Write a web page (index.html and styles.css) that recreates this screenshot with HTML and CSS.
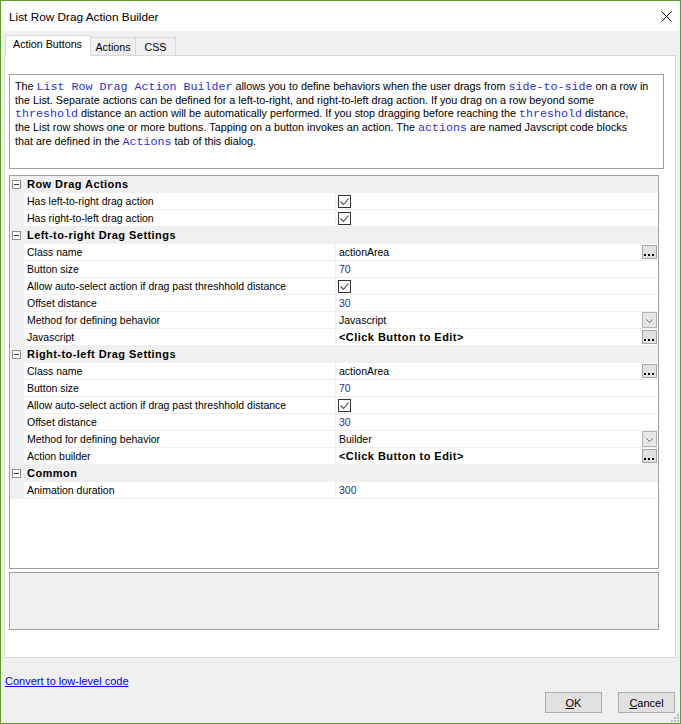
FILE: index.html
```html
<!DOCTYPE html>
<html>
<head>
<meta charset="utf-8">
<link rel="stylesheet" href="styles.css">
</head>
<body>
<div class="window">
  <div class="titlebar">
    <span class="title">List Row Drag Action Builder</span>
    <svg class="close" width="11" height="11" viewBox="0 0 11 11"><path d="M0.5 0.5 L10.5 10.5 M10.5 0.5 L0.5 10.5" stroke="#000" stroke-width="1"/></svg>
  </div>
  <div class="tabs">
    <div class="tab active">Action Buttons</div>
    <div class="tab inactive w-actions">Actions</div>
    <div class="tab inactive w-css">CSS</div>
  </div>
  <div class="panel">
    <div class="desc">
      The <span class="code">List Row Drag Action Builder</span> allows you to define behaviors when the user drags from <span class="code">side-to-side</span> on a row in<br>
      the List. Separate actions can be defined for a left-to-right, and right-to-left drag action. If you drag on a row beyond some<br>
      <span class="code">threshold</span> distance an action will be automatically performed. If you stop dragging before reaching the <span class="code">threshold</span> distance,<br>
      the List row shows one or more buttons. Tapping on a button invokes an action. The <span class="code">actions</span> are named Javscript code blocks<br>
      that are defined in the <span class="code">Actions</span> tab of this dialog.
    </div>
    <div class="grid">
      <div class="row cat"><span class="minus"></span><span class="cat-name">Row Drag Actions</span></div>
      <div class="row prop"><span class="gutter"></span><span class="label">Has left-to-right drag action</span><span class="value chk"><span class="check"><svg width="11" height="11" viewBox="0 0 11 11"><path d="M1.5 5.5 L4.5 8.5 L9.5 2.5" fill="none" stroke="#4a4a4a" stroke-width="1.1"/></svg></span></span></div>
      <div class="row prop"><span class="gutter"></span><span class="label">Has right-to-left drag action</span><span class="value chk"><span class="check"><svg width="11" height="11" viewBox="0 0 11 11"><path d="M1.5 5.5 L4.5 8.5 L9.5 2.5" fill="none" stroke="#4a4a4a" stroke-width="1.1"/></svg></span></span></div>

      <div class="row cat"><span class="minus"></span><span class="cat-name">Left-to-right Drag Settings</span></div>
      <div class="row prop"><span class="gutter"></span><span class="label">Class name</span><span class="value"><span class="vtext">actionArea</span><span class="btn-ell"><svg width="13" height="12" viewBox="0 0 13 12"><rect x="1" y="8" width="2" height="2" fill="#000"/><rect x="5" y="8" width="2" height="2" fill="#000"/><rect x="9" y="8" width="2" height="2" fill="#000"/></svg></span></span></div>
      <div class="row prop"><span class="gutter"></span><span class="label">Button size</span><span class="value"><span class="vtext num">70</span></span></div>
      <div class="row prop"><span class="gutter"></span><span class="label">Allow auto-select action if drag past threshhold distance</span><span class="value chk"><span class="check"><svg width="11" height="11" viewBox="0 0 11 11"><path d="M1.5 5.5 L4.5 8.5 L9.5 2.5" fill="none" stroke="#4a4a4a" stroke-width="1.1"/></svg></span></span></div>
      <div class="row prop"><span class="gutter"></span><span class="label">Offset distance</span><span class="value"><span class="vtext num">30</span></span></div>
      <div class="row prop"><span class="gutter"></span><span class="label">Method for defining behavior</span><span class="value"><span class="vtext">Javascript</span><span class="btn-drop"><svg width="13" height="14" viewBox="0 0 13 14"><path d="M3.5 6.5 L6.5 9.5 L9.5 6.5" fill="none" stroke="#606060" stroke-width="1"/></svg></span></span></div>
      <div class="row prop"><span class="gutter"></span><span class="label">Javascript</span><span class="value"><span class="vtext edit">&lt;Click Button to Edit&gt;</span><span class="btn-ell"><svg width="13" height="12" viewBox="0 0 13 12"><rect x="1" y="8" width="2" height="2" fill="#000"/><rect x="5" y="8" width="2" height="2" fill="#000"/><rect x="9" y="8" width="2" height="2" fill="#000"/></svg></span></span></div>

      <div class="row cat"><span class="minus"></span><span class="cat-name">Right-to-left Drag Settings</span></div>
      <div class="row prop"><span class="gutter"></span><span class="label">Class name</span><span class="value"><span class="vtext">actionArea</span><span class="btn-ell"><svg width="13" height="12" viewBox="0 0 13 12"><rect x="1" y="8" width="2" height="2" fill="#000"/><rect x="5" y="8" width="2" height="2" fill="#000"/><rect x="9" y="8" width="2" height="2" fill="#000"/></svg></span></span></div>
      <div class="row prop"><span class="gutter"></span><span class="label">Button size</span><span class="value"><span class="vtext num">70</span></span></div>
      <div class="row prop"><span class="gutter"></span><span class="label">Allow auto-select action if drag past threshhold distance</span><span class="value chk"><span class="check"><svg width="11" height="11" viewBox="0 0 11 11"><path d="M1.5 5.5 L4.5 8.5 L9.5 2.5" fill="none" stroke="#4a4a4a" stroke-width="1.1"/></svg></span></span></div>
      <div class="row prop"><span class="gutter"></span><span class="label">Offset distance</span><span class="value"><span class="vtext num">30</span></span></div>
      <div class="row prop"><span class="gutter"></span><span class="label">Method for defining behavior</span><span class="value"><span class="vtext">Builder</span><span class="btn-drop"><svg width="13" height="14" viewBox="0 0 13 14"><path d="M3.5 6.5 L6.5 9.5 L9.5 6.5" fill="none" stroke="#606060" stroke-width="1"/></svg></span></span></div>
      <div class="row prop"><span class="gutter"></span><span class="label">Action builder</span><span class="value"><span class="vtext edit">&lt;Click Button to Edit&gt;</span><span class="btn-ell"><svg width="13" height="12" viewBox="0 0 13 12"><rect x="1" y="8" width="2" height="2" fill="#000"/><rect x="5" y="8" width="2" height="2" fill="#000"/><rect x="9" y="8" width="2" height="2" fill="#000"/></svg></span></span></div>

      <div class="row cat"><span class="minus"></span><span class="cat-name">Common</span></div>
      <div class="row prop"><span class="gutter"></span><span class="label">Animation duration</span><span class="value"><span class="vtext num">300</span></span></div>
    </div>
    <div class="help"></div>
  </div>
  <div class="footer">
    <a class="link" href="#">Convert to low-level code</a>
    <div class="buttons">
      <button class="btn"><u>O</u>K</button>
      <button class="btn"><u>C</u>ancel</button>
    </div>
  </div>
  <svg class="grip" width="8" height="8" viewBox="0 0 8 8">
    <rect x="6" y="0" width="2" height="2" fill="#b8b8b8"/>
    <rect x="3" y="3" width="2" height="2" fill="#b8b8b8"/>
    <rect x="6" y="3" width="2" height="2" fill="#b8b8b8"/>
    <rect x="0" y="6" width="2" height="2" fill="#b8b8b8"/>
    <rect x="3" y="6" width="2" height="2" fill="#b8b8b8"/>
    <rect x="6" y="6" width="2" height="2" fill="#b8b8b8"/>
  </svg>
</div>
</body>
</html>
```

FILE: styles.css
```css
body {
  margin: 0;
  background: #fff;
  font-family: "Liberation Sans", Arial, sans-serif;
  color: #000;
}

.window {
  width: 681px;
  height: 724px;
  box-sizing: border-box;
  border: 1px solid #5f9b32;
  background: #f0f0f0;
  display: flex;
  flex-direction: column;
  position: relative;
}

.titlebar {
  flex: none;
  height: 30px;
  box-sizing: border-box;
  background: #fff;
  display: flex;
  align-items: center;
  justify-content: space-between;
  padding: 2px 8px 0 8px;
}

.title {
  font-size: 11.8px;
}

.close {
  display: block;
  margin-top: -2px;
}

.tabs {
  flex: none;
  height: 24px;
  display: flex;
  align-items: flex-end;
  padding-left: 4px;
}

.tab {
  box-sizing: border-box;
  border: 1px solid #d9d9d9;
  border-bottom: none;
  font-size: 10.7px;
  line-height: 14px;
  white-space: nowrap;
}

.tab.active {
  width: 86px;
  height: 21px;
  background: #fff;
  padding: 1px 0 0 7px;
  margin-bottom: -1px;
  position: relative;
  z-index: 1;
}

.tab.inactive {
  height: 18px;
  margin-left: -1px;
  padding-top: 2px;
  text-align: center;
  background: #f0f0f0;
}

.w-actions { width: 46px; }
.w-css { width: 41px; }

.panel {
  flex: none;
  margin-left: 3px;
  width: 672px;
  height: 603px;
  box-sizing: border-box;
  border: 1px solid #d9d9d9;
  background: #fff;
  padding: 18px 0 0 4px;
}

.desc {
  width: 655px;
  height: 95px;
  box-sizing: border-box;
  border: 1px solid #a0a0a0;
  padding: 5px 5px;
  font-size: 10.8px;
  line-height: 13.7px;
  white-space: nowrap;
}

.code {
  font-family: "Liberation Mono", "Courier New", monospace;
  font-size: 11.67px;
  line-height: 1;
  color: #2f2fd6;
}

.grid {
  margin-top: 6px;
  width: 650px;
  height: 394px;
  box-sizing: border-box;
  border: 1px solid #a0a0a0;
  background: #fff;
}

.row {
  height: 17px;
  box-sizing: border-box;
  border-bottom: 1px solid #f0f0f0;
}

.cat {
  display: flex;
  align-items: center;
  background: #f0f0f0;
}

.minus {
  width: 9px;
  height: 9px;
  box-sizing: border-box;
  border: 1px solid #8e8e8e;
  background: #fff;
  margin-left: 2px;
  display: flex;
  align-items: center;
  justify-content: center;
}

.minus::after {
  content: "";
  width: 5px;
  height: 1px;
  background: #3a3a3a;
}

.cat-name {
  margin-left: 6px;
  font-weight: bold;
  font-size: 11px;
  letter-spacing: 0.45px;
  white-space: nowrap;
}

.prop {
  display: grid;
  grid-template-columns: 14px 311px 323px;
}

.gutter {
  background: #f0f0f0;
}

.label {
  background: #fff;
  padding-left: 3px;
  font-size: 10.5px;
  line-height: 16px;
  white-space: nowrap;
  overflow: hidden;
}

.value {
  border-left: 1px solid #f0f0f0;
  display: flex;
  align-items: center;
  padding-left: 3px;
  font-size: 10.5px;
  line-height: 16px;
  white-space: nowrap;
}

.value.chk {
  padding-left: 2px;
}

.vtext {
  flex: 1;
}

.num {
  color: #1f3676;
}

.edit {
  font-weight: bold;
  font-size: 11px;
  letter-spacing: 0.45px;
}

.check {
  width: 13px;
  height: 13px;
  box-sizing: border-box;
  border: 1px solid #333;
  background: #fff;
  display: flex;
}

.btn-ell {
  width: 15px;
  height: 14px;
  box-sizing: border-box;
  border: 1px solid #a6a6a6;
  background: #e1e1e1;
  margin-right: 1px;
  display: flex;
}

.btn-drop {
  width: 15px;
  height: 16px;
  box-sizing: border-box;
  border: 1px solid #b4b4b4;
  background: #e6e6e6;
  margin-right: 1px;
  display: flex;
}

.help {
  margin-top: 3px;
  width: 650px;
  height: 58px;
  box-sizing: border-box;
  border: 1px solid #a0a0a0;
  background: #f0f0f0;
}

.footer {
  flex: none;
  display: flex;
  flex-direction: column;
}

.link {
  align-self: flex-start;
  margin: 17px 0 0 4px;
  font-size: 11px;
  line-height: 13px;
  color: #0000ff;
  text-decoration: underline;
}

.buttons {
  display: flex;
  justify-content: flex-end;
  gap: 16px;
  margin-top: 4px;
  padding-right: 5px;
}

.btn {
  width: 57px;
  height: 21px;
  box-sizing: border-box;
  border: 1px solid #adadad;
  background: #e1e1e1;
  font-family: "Liberation Sans", Arial, sans-serif;
  font-size: 11px;
  color: #000;
  padding: 0;
}

.grip {
  position: absolute;
  right: 1px;
  bottom: 1px;
}
```
